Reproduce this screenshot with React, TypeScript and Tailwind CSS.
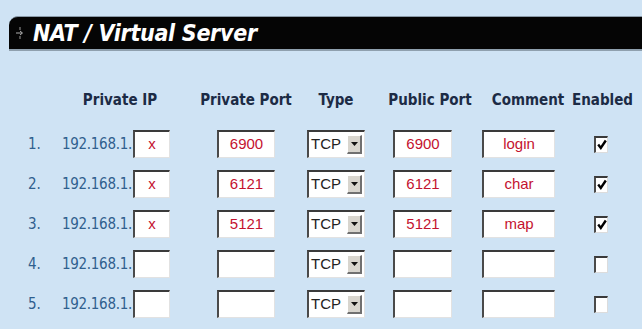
import React from 'react';

const rows = [
  { ip: 'x', priv: '6900', pub: '6900', comment: 'login', on: true },
  { ip: 'x', priv: '6121', pub: '6121', comment: 'char', on: true },
  { ip: 'x', priv: '5121', pub: '5121', comment: 'map', on: true },
  { ip: '', priv: '', pub: '', comment: '', on: false },
  { ip: '', priv: '', pub: '', comment: '', on: false },
];

const cond = { fontFamily: '"DejaVu Sans Condensed", "DejaVu Sans", sans-serif' };
const arial = { fontFamily: '"Liberation Sans", Arial, sans-serif' };

const Field: React.FC<{ value: string; w: string }> = ({ value, w }) => (
  <div
    className={`${w} h-[28px] flex items-center justify-center bg-white border-t-2 border-l-2 border-r border-b border-t-[#3a3a3a] border-l-[#4a4a4a] border-r-[#e2e2e2] border-b-[#e2e2e2] text-[15px] text-[#c4122f]`}
    style={arial}
  >
    {value}
  </div>
);

const TypeSelect: React.FC = () => (
  <div className="w-[58px] h-[28px] flex bg-white border-t-2 border-l-2 border-r border-b border-t-[#3a3a3a] border-l-[#4a4a4a] border-r-[#e2e2e2] border-b-[#e2e2e2]">
    <div className="flex-1 flex items-center pl-[2px] text-[15px] text-[#222]" style={arial}>
      TCP
    </div>
    <div className="w-[15px] my-[3px] mr-[2px] flex items-center justify-center bg-[#d8d5ce] border-t border-l border-t-white border-l-white border-r-2 border-b-2 border-r-[#707070] border-b-[#707070]">
      <svg width="7" height="4" viewBox="0 0 7 4">
        <path d="M0 0h7L3.5 4z" fill="#111" />
      </svg>
    </div>
  </div>
);

const Check: React.FC<{ on: boolean }> = ({ on }) => (
  <div className="w-[14px] h-[17px] bg-white border-t-2 border-l-2 border-r border-b border-t-[#3a3a3a] border-l-[#4a4a4a] border-r-[#dcdcdc] border-b-[#dcdcdc] flex items-center justify-center">
    {on && (
      <svg width="10" height="11" viewBox="0 0 10 11">
        <path d="M1.2 5.5l2.6 3.4L8.8 1.5" stroke="#000" strokeWidth="2.4" fill="none" />
      </svg>
    )}
  </div>
);

export default function App() {
  return (
    <div className="w-[642px] h-[329px] bg-[#cfe3f4] overflow-hidden">
      {/* Title bar */}
      <div className="pt-[16px] pl-[9px]">
        <div className="h-[35px] flex items-center bg-[#050505] rounded-tl-[9px] border-t border-b-2 border-t-[#8a9aa8] border-b-[#8fa0ae]">
          <svg width="10" height="14" viewBox="0 0 10 14" className="ml-[6px] mr-[8px]">
            <path d="M5 1v3M5 10v3" stroke="#9a9a9a" strokeWidth="1" />
            <path d="M1 7h6M5 5l2.5 2L5 9" stroke="#b0b0b0" strokeWidth="1" fill="none" />
          </svg>
          <span className="text-white font-bold italic text-[23px] leading-none tracking-[-0.3px]" style={cond}>
            NAT / Virtual Server
          </span>
        </div>
      </div>

      {/* Column headers */}
      <div className="flex mt-[39px] h-[20px] items-center font-bold text-[15px] text-[#1c2b45] whitespace-nowrap" style={cond}>
        <div className="w-[70px]" />
        <div className="w-[100px] text-center">Private IP</div>
        <div className="w-[26px]" />
        <div className="w-[100px] text-center">Private Port</div>
        <div className="w-[10px]" />
        <div className="w-[60px] text-center">Type</div>
        <div className="w-[14px]" />
        <div className="w-[100px] text-center">Public Port</div>
        <div className="w-[4px]" />
        <div className="w-[88px] text-center">Comment</div>
        <div className="w-[56px] text-center">Enabled</div>
      </div>

      {/* Rows */}
      <div className="mt-[20px] flex flex-col gap-[12px]">
        {rows.map((r, i) => (
          <div key={i} className="flex items-center h-[28px] pl-[28px]">
            <div className="w-[34px] text-[15px] text-[#2f5f8e]" style={cond}>
              {i + 1}.
            </div>
            <div className="w-[71px] text-[15px] tracking-[-0.3px] text-[#2f5f8e]" style={cond}>
              192.168.1.
            </div>
            <Field value={r.ip} w="w-[37px]" />
            <div className="w-[47px]" />
            <Field value={r.priv} w="w-[58px]" />
            <div className="w-[32px]" />
            <TypeSelect />
            <div className="w-[28px]" />
            <Field value={r.pub} w="w-[59px]" />
            <div className="w-[30px]" />
            <Field value={r.comment} w="w-[73px]" />
            <div className="w-[39px]" />
            <Check on={r.on} />
          </div>
        ))}
      </div>
    </div>
  );
}
